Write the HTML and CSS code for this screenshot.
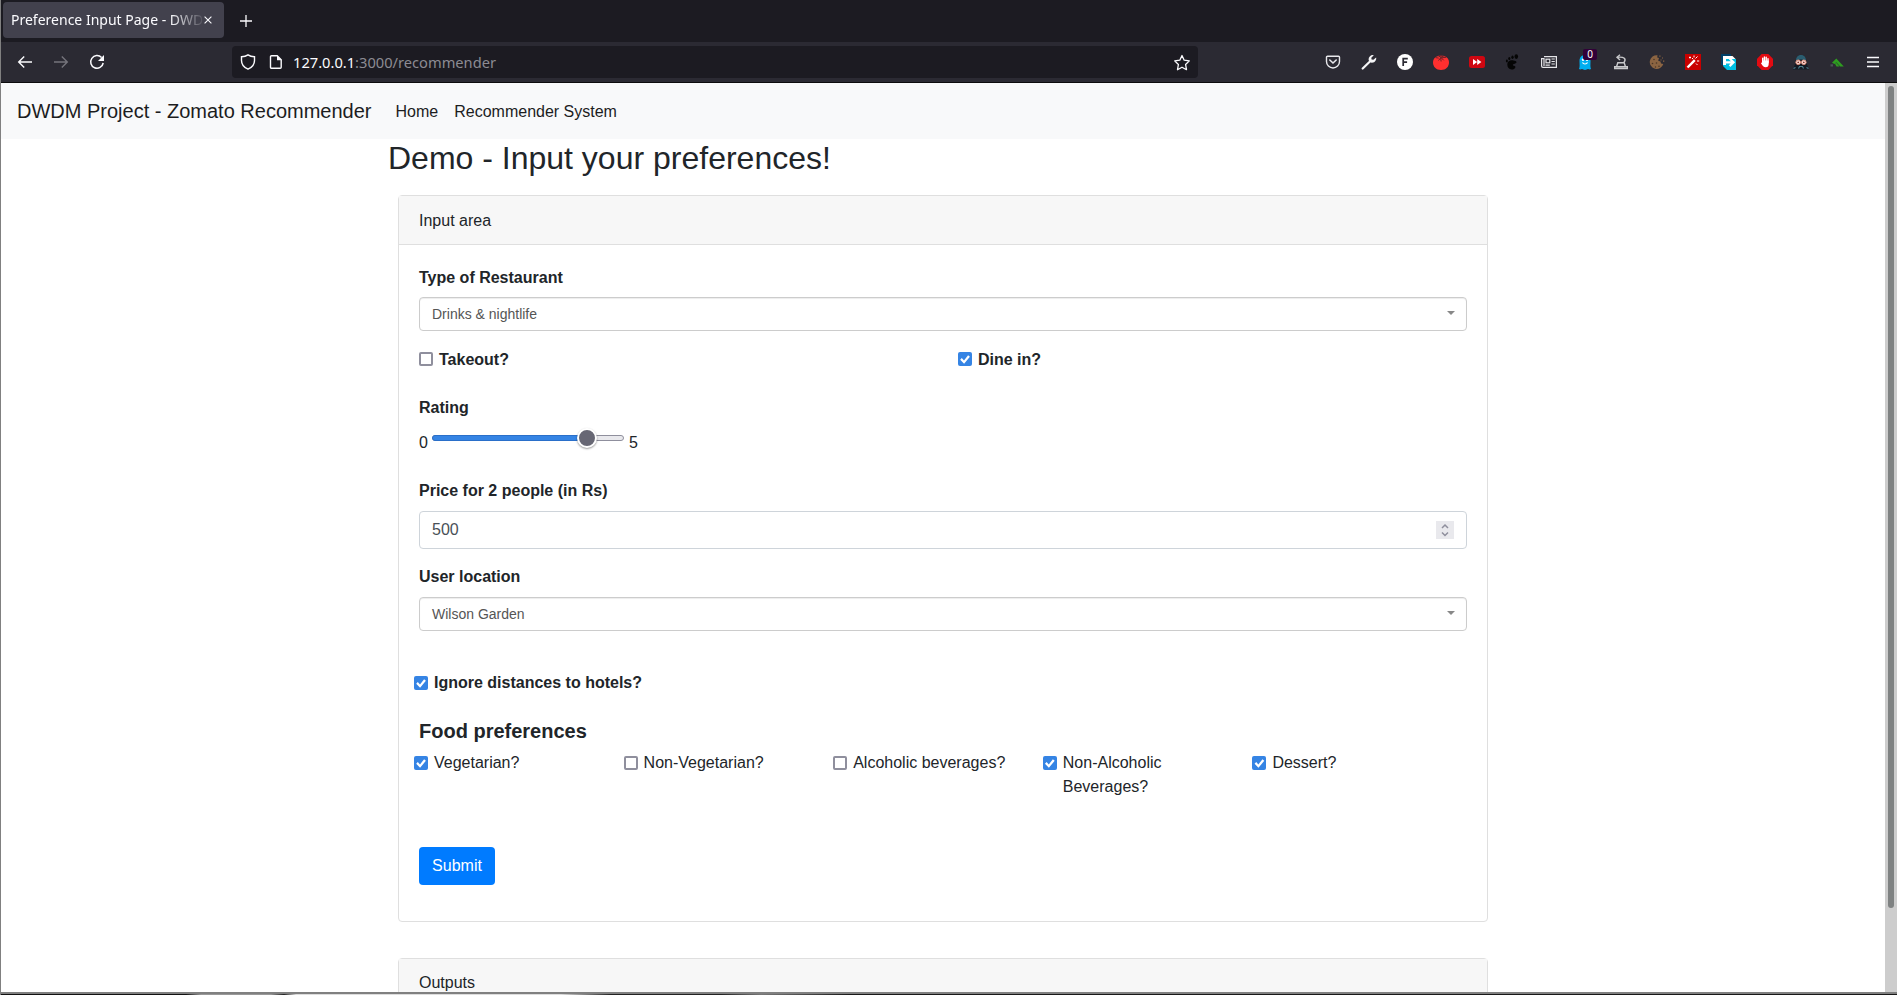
FILE: index.html
```html
<!DOCTYPE html>
<html lang="en">
<head>
<meta charset="utf-8">
<title>Preference Input Page - DWDM</title>
<link rel="stylesheet" href="styles.css">
</head>
<body>
<div class="window">
  <div class="tabbar">
    <div class="tab">
      <span class="tab-title">Preference Input Page - DWD</span>
      <svg class="tab-close" width="8" height="8" viewBox="0 0 8 8"><path d="M.6.6l6.8 6.8M7.4.6L.6 7.4" stroke="#fbfbfe" stroke-width="1.1"/></svg>
    </div>
    <svg class="tab-new" width="12" height="12" viewBox="0 0 12 12"><path d="M6 0v12M0 6h12" stroke="#fbfbfe" stroke-width="1.3"/></svg>
  </div>
  <div class="toolbar">
    <div class="nav-buttons">
      <svg width="16" height="16" viewBox="0 0 16 16"><path d="M15 8H1.8M7.2 2.5L1.7 8l5.5 5.5" fill="none" stroke="#fbfbfe" stroke-width="1.4"/></svg>
      <svg width="16" height="16" viewBox="0 0 16 16"><path d="M1 8h13.2M8.8 2.500L14.300 8l-5.500 5.500" fill="none" stroke="#75747c" stroke-width="1.4"/></svg>
      <svg width="16" height="16" viewBox="0 0 16 16"><path d="M12.600 3.600A6.300 6.300 0 1 0 14.200 9" fill="none" stroke="#fbfbfe" stroke-width="1.5"/><path d="M15 1v6H9z" fill="#fbfbfe"/></svg>
    </div>
    <div class="urlbar">
      <svg width="16" height="16" viewBox="0 0 16 16"><path d="M8 .9c2 1.500 4.200 1.900 6.500 1.900v3.600c0 4-2.500 7-6.500 8.800-4-1.800-6.500-4.800-6.500-8.800V2.800C3.800 2.800 6 2.400 8 .9z" fill="none" stroke="#fbfbfe" stroke-width="1.400"/></svg>
      <svg class="page-icon" width="14" height="16" viewBox="0 0 14 16"><path d="M2.500 1.800h5.700l4 4v7.400a1 1 0 0 1-1 1H2.500a1 1 0 0 1-1-1V2.800a1 1 0 0 1 1-1z" fill="none" stroke="#fbfbfe" stroke-width="1.400"/><path d="M8 1.500v4.700h4.700z" fill="#fbfbfe"/></svg>
      <span class="url"><span class="host">127.0.0.1</span>:3000/recommender</span>
      <svg class="star" width="18" height="17" viewBox="0 0 18 17"><path d="M9 1.500l2.200 4.700 5.100.700-3.700 3.600.900 5.200L9 13.200l-4.500 2.500.900-5.200L1.700 6.900l5.100-.700z" fill="none" stroke="#fbfbfe" stroke-width="1.300" stroke-linejoin="round"/></svg>
    </div>
    <div class="extensions">
      <svg viewBox="0 0 16 16"><path d="M2.500 2.200h11a1 1 0 0 1 1 1v4.300a6.500 6.500 0 0 1-13 0V3.200a1 1 0 0 1 1-1z" fill="none" stroke="#e8e8ec" stroke-width="1.400"/><path d="M4.800 6L8 9l3.200-3" fill="none" stroke="#e8e8ec" stroke-width="1.600" stroke-linecap="round"/></svg>
      <svg viewBox="0 0 16 16"><path d="M1.700 14.500l7.500-7.300" stroke="#f4f4f6" stroke-width="2.200" stroke-linecap="round"/><path d="M12.800 1.200a4.300 4.300 0 0 0-5 5.400l2 2a4.300 4.300 0 0 0 5.300-5.200l-2.700 2.400-1.800-.300-.300-1.700z" fill="#f4f4f6"/></svg>
      <svg viewBox="0 0 16 16"><circle cx="8" cy="8" r="8" fill="#fff"/><path d="M6.200 12V4.600h4.600M6.200 8.200h3.900" fill="none" stroke="#2b2a33" stroke-width="1.700"/></svg>
      <svg viewBox="0 0 16 16"><path d="M0 8.500C0 4.500 3 1.800 8 1.800s8 2.700 8 6.700-3 7.500-8 7.500-8-3.500-8-7.500z" fill="#fe2f2f"/><path d="M2.500 3.600l3.200.5M5.500 6.500l2.200-2.700.4 3.700M10.700 6.300L8.300 3.800l5-.5M8 3.800V.8M5 1.500l3 2 3-1.800" fill="none" stroke="#6b2228" stroke-width="1"/></svg>
      <svg viewBox="0 0 16 16"><rect y="2" width="16" height="12" rx="2.500" fill="#cf0711"/><path d="M4 5l4.200 3L4 11zM8.200 5l4.200 3-4.200 3z" fill="#fff"/></svg>
      <svg viewBox="0 0 16 16" fill="#050505"><path d="M8.500 6.500C5 5.500 2.300 7.300 2.300 10.600c0 3 1.700 4.900 4.300 4.900 2.200 0 3.800-1.200 3.800-2.600 0-1.700-2.600-.8-2.600-2 0-1 3.700-1.300 3.700-2.600 0-1-1.500-1.600-3-1.800z"/><ellipse cx="1.900" cy="7" rx="1" ry="1.400"/><ellipse cx="4.300" cy="4.500" rx="1.100" ry="1.500"/><ellipse cx="7.500" cy="3.200" rx="1.200" ry="1.700"/><ellipse cx="11.300" cy="2.600" rx="1.800" ry="2.400"/></svg>
      <svg viewBox="0 0 16 16" fill="none" stroke="#e4e4e8" stroke-width="1.200"><path d="M3 2.600h12.400v10.800H2A1.400 1.400 0 0 1 .6 12V4.600H3V12"/><rect x="5" y="5.200" width="3.800" height="3.600"/><path d="M10.500 5h3.300M10.500 7.500h3.300M10.500 10h3.300M4.500 11.200h4.300"/></svg>
      <span class="ghost"><svg viewBox="0 0 16 16"><path d="M2 15c1-2 .5-5 .5-8C2.500 3 5 1 8 1s5.500 2 5.500 6c0 3-.5 6 .5 8-1.500 1-2 0-3 0s-1.500 1-3 1-2-1-3-1-1.500 1-3 0z" fill="#00aef0"/><circle cx="6" cy="5.800" r="1.200" fill="#fff"/><circle cx="10" cy="5.800" r="1.200" fill="#fff"/><path d="M5.500 8.500c1 2 4 2 5 0" fill="none" stroke="#fff" stroke-width="1.200"/></svg><b>0</b></span>
      <svg viewBox="0 0 16 16" fill="none" stroke="#c9c9cc" stroke-width="1.400"><path d="M1.700 14.500v-1.700h12.600v1.700zM3.600 12.500l1.200-3.800h6.400l1.200 3.800M11 8.500c2.500-3.500.5-6-6.500-5.300"/><path d="M7 .800L4 3.200 7 6"/></svg>
      <svg viewBox="0 0 16 16"><path d="M8.500 1.200A6.900 6.900 0 1 0 14.300 10l-2.300-.5-.5-2-2.300-.8.8-2.700-1.800-.5z" fill="#8b6442"/><g fill="#4b3526"><circle cx="5" cy="5.500" r=".8"/><circle cx="3.500" cy="9.500" r=".8"/><circle cx="7.500" cy="9" r=".8"/><circle cx="10" cy="12.300" r=".8"/><circle cx="6.500" cy="13" r=".7"/></g><path d="M10.300 1.500h1.200v1.200h-1.200zM13 3.500h1v1h-1zM11.500 5.500h1v1h-1zM14 6.500h1.300v1.300H14z" fill="#8b6442"/></svg>
      <svg viewBox="0 0 16 16"><path d="M0 0h16v16H0z" fill="#c90000"/><path d="M2.500 13.500l7.300-7.300" stroke="#fff" stroke-width="2.400"/><path d="M5 2.500v2M4 3.500h2M9 1.500v2M12.500 2.500l-2 2M12 7h2.200M11 9.500l1.500 1.500M7 4l1 1" stroke="#fff" stroke-width="1"/></svg>
      <svg viewBox="0 0 16 16"><path d="M0 0h10v11H0z" fill="#003f67"/><path d="M2 2h9.500L15 5.500H2z" fill="#fff"/><path d="M2 5h13v11H6l-4-4z" fill="#00c0e4"/><path d="M2 3h3v8H2z" fill="#fff"/><path d="M4 8.300h8M8.600 4.500l3.900 3.800-3.900 3.800" fill="none" stroke="#fff" stroke-width="2.200"/></svg>
      <svg viewBox="0 0 16 16"><path d="M4.700 0h6.600L16 4.700v6.600L11.300 16H4.700L0 11.300V4.700z" fill="#e20b12"/><path d="M5.700 8V4.200M7.400 7.500V3M9.200 7.500V3.300M11 8.500V4.800" stroke="#fff" stroke-width="1.400" stroke-linecap="round"/><path d="M5 6.500h6.700V10c0 2-1 3.300-3 3.300-2.200 0-3-1.300-4.800-4.300l1.100-.400z" fill="#fff"/></svg>
      <svg viewBox="0 0 16 16"><path d="M0 15.500L2.500 9c0-5 2-8 5.500-8s5.500 3 5.500 8l2.500 6.500z" fill="#131a23"/><path d="M2.800 6.500C3.300 2.500 5.200 1 8 1s4.700 1.500 5.200 5.500L8 5.500z" fill="#2b5d70"/><g fill="#fbe9e4" stroke="#e08a76"><circle cx="5.200" cy="8.300" r="2.300"/><circle cx="10.800" cy="8.300" r="2.300"/></g><circle cx="5.200" cy="8.300" r=".9" fill="#802b20"/><circle cx="10.800" cy="8.300" r=".9" fill="#802b20"/><path d="M5.500 14.500l1-2h3l1 2M.5 14.500l2-1M15.500 14.500l-2-1" fill="none" stroke="#4f8191" stroke-width="1.100"/></svg>
      <svg viewBox="0 0 16 16"><path d="M3 8.800L7.300 4.500l7.500 8h-3.600L7.300 8.300 5.500 10zM6 9.800l1.200-1 3.300 3.700H7.500z" fill="#2e9e20"/><path d="M1.500 10.300h2.500v2.200H1.500z" fill="#4d5159"/></svg>
      <svg viewBox="0 0 16 16"><path d="M2 3.500h12M2 8h12M2 12.500h12" stroke="#fbfbfe" stroke-width="1.400"/></svg>
    </div>
  </div>

  <div class="viewport">
    <div class="page">
      <nav class="navbar">
        <span class="brand">DWDM Project - Zomato Recommender</span>
        <span class="nav-link">Home</span>
        <span class="nav-link">Recommender System</span>
      </nav>
      <main class="container">
        <h2 class="title">Demo - Input your preferences!</h2>
        <section class="card">
          <div class="card-header">Input area</div>
          <div class="card-body">
            <label class="label type-label">Type of Restaurant</label>
            <div class="select"><span>Drinks &amp; nightlife</span><i class="caret"></i></div>
            <div class="service-row">
              <label class="check strong"><i class="box"></i>Takeout?</label>
              <label class="check strong"><i class="box on"></i>Dine in?</label>
            </div>
            <label class="label">Rating</label>
            <div class="rating"><span>0</span><div class="slider"><div class="fill"></div><div class="thumb"></div></div><span>5</span></div>
            <label class="label">Price for 2 people (in Rs)</label>
            <div class="number"><span>500</span>
              <span class="spinner"><svg width="18" height="18" viewBox="0 0 18 18"><path d="M6 7l3-3 3 3M6 11.500l3 3 3-3" fill="none" stroke="#8f8f9d" stroke-width="1.500"/></svg></span>
            </div>
            <label class="label">User location</label>
            <div class="select"><span>Wilson Garden</span><i class="caret"></i></div>
            <div class="ignore-row"><label class="check strong"><i class="box on"></i>Ignore distances to hotels?</label></div>
            <h5 class="subtitle">Food preferences</h5>
            <div class="food">
              <label class="check"><i class="box on"></i><span>Vegetarian?</span></label>
              <label class="check"><i class="box"></i><span>Non-Vegetarian?</span></label>
              <label class="check"><i class="box"></i><span>Alcoholic beverages?</span></label>
              <label class="check"><i class="box on"></i><span>Non-Alcoholic<br>Beverages?</span></label>
              <label class="check"><i class="box on"></i><span>Dessert?</span></label>
            </div>
            <button class="submit" type="button">Submit</button>
          </div>
        </section>
        <section class="card outputs">
          <div class="card-header">Outputs</div>
        </section>
      </main>
    </div>
    <div class="scrollbar"><div class="scroll-thumb"></div></div>
  </div>
  <div class="desktop-edge"></div>
</div>
</body>
</html>
```
FILE: styles.css
```css
* { box-sizing: border-box; }
html, body { margin: 0; height: 995px; overflow: hidden; }
body {
  font: 16px/24px "Liberation Sans", Arial, sans-serif;
  color: #212529;
  background: #fff;
}
svg { display: block; flex: none; }
.window { display: flex; flex-direction: column; height: 995px; width: 1897px; border-left: 1px solid #808080; }

/* Browser chrome */
.tabbar { height: 42px; flex: none; background: #1c1b22; display: flex; align-items: flex-start; padding: 2px 0 0 2px; }
.tab {
  width: 221px; height: 36px; border-radius: 4px; background: #42414d; color: #fbfbfe;
  display: flex; align-items: center; padding: 0 11px 0 8px;
  font: 14px/20px "Noto Sans", sans-serif;
}
.tab-title {
  width: 191px; flex: none; overflow: hidden; white-space: nowrap;
  -webkit-mask-image: linear-gradient(to left, rgba(0, 0, 0, .1), #000 32px);
  mask-image: linear-gradient(to left, rgba(0, 0, 0, .1), #000 32px);
}
.tab-close { margin-left: 2px; }
.tab-new { margin: 13px 0 0 16px; }
.toolbar { height: 41px; flex: none; background: #2b2a33; border-bottom: 1px solid #0c0c0d; display: flex; align-items: center; }
.nav-buttons { width: 231px; display: flex; gap: 20px; padding-left: 16px; }
.urlbar {
  width: 966px; height: 32px; border-radius: 4px; background: #1c1b22;
  display: flex; align-items: center; padding: 0 7px 0 8px;
}
.page-icon { margin-left: 13px; }
.url { margin-left: 10px; font: 14.67px/20px "Noto Sans", sans-serif; color: #8c8b93; }
.host { color: #fbfbfe; }
.star { margin-left: auto; }
.extensions { display: flex; gap: 20px; margin-left: 127px; }
.extensions svg { width: 16px; height: 16px; }
.ghost { position: relative; width: 16px; }
.ghost b {
  position: absolute; left: 6px; top: -5px; width: 14px; height: 11px; border-radius: 2px;
  background: #320038; color: #fff; font: 10px/11px "Noto Sans", sans-serif; text-align: center;
}

/* Page */
.viewport { height: 909px; flex: none; display: flex; overflow: hidden; }
.page { width: 1884px; }
.scrollbar { width: 12px; background: #cdcdcd; padding: 3px 3px 0; }
.scroll-thumb { height: 822px; border-radius: 3px; background: #7f8282; }
.navbar { height: 56px; background: #f8f9fa; display: flex; align-items: center; padding: 0 16px; color: #1c1d1e; }
.brand { font-size: 20px; line-height: 30px; margin-right: 16px; }
.nav-link { padding: 2px 8px 0; }
.container { width: 1110px; margin: 0 auto; }
.title { font-size: 32px; line-height: 38.4px; font-weight: 400; margin: 0 0 18px; }
.card { margin: 0 10px; border: 1px solid #dfdfdf; border-radius: 4px; }
.outputs { margin-top: 36px; }
.card-header { height: 49px; padding: 13px 20px 11px; background: #f7f7f7; border-bottom: 1px solid #dfdfdf; }
.outputs .card-header { padding-top: 12px; }
.card-body { padding: 21px 20px 36px; }
.label { display: block; font-weight: 700; margin-bottom: 8px; }
.type-label { margin-bottom: 7px; }
.select {
  height: 34px; border: 1px solid #ccc; border-radius: 4px; padding: 0 11px 0 12px;
  box-shadow: inset 0 1px 1px rgba(0, 0, 0, .075);
  display: flex; align-items: center; justify-content: space-between; font-size: 14px; color: #555;
}
.caret { border: 4px solid transparent; border-top-color: #888; border-bottom: 0; margin-top: -2px; }
.service-row { display: grid; grid-template-columns: 539px 1fr; margin: 17px 0 24px; }
.check { display: flex; }
.strong { font-weight: 700; }
.box { flex: none; width: 14px; height: 14px; margin: 5px 6px 0 0; border: 2px solid #8f8f9d; border-radius: 2px; background: #fff; }
.service-row .box { margin-top: 4px; }
.box.on { border: 0; background: #3584e4; }
.box.on::after {
  content: ""; display: block; width: 14px; height: 14px; background: #fff;
  clip-path: polygon(2.200px 7.300px, 3.800px 5.700px, 6px 8px, 10.100px 2.900px, 11.900px 4.400px, 6.100px 11.400px);
}
.rating { display: flex; height: 24px; margin: 11px 0 24px; }
.slider { position: relative; width: 192px; height: 6px; margin: 4px 5px 0 4px; border: 1px solid #8f8f9d; border-radius: 3px; background: #e9e9ed; }
.fill { width: 155px; height: 6px; margin: -1px; border: 1px solid #2a6fc9; border-radius: 3px; background: #3584e4; }
.thumb { position: absolute; left: 144px; top: -8px; width: 20px; height: 20px; border-radius: 50%; border: 2px solid #fff; background: #676774; box-shadow: 0 1px 2px rgba(0, 0, 0, .4); }
.number {
  height: 38px; border: 1px solid #ced4da; border-radius: 4px; margin-bottom: 16px; padding: 0 12px;
  display: flex; align-items: center; justify-content: space-between; color: #495057;
}
.spinner { background: #e9e9ed; }
.ignore-row { margin: 40px 0 24px -5px; }
.subtitle { font-size: 20px; line-height: 24px; font-weight: 700; margin: 0 0 8px; }
.food { display: grid; grid-template-columns: repeat(5, 209.6px); margin-left: -5px; height: 96px; }
.submit {
  display: block; width: 76px; height: 38px; border: 0; border-radius: 4px; padding: 0;
  background: #007bff; color: #fff; font: 16px/24px "Liberation Sans", Arial, sans-serif;
}
.desktop-edge { flex: 1; border-top: 2px solid #808080; background: linear-gradient(90deg, #111 0 185px, #999 200px 270px, #222 283px, #ddd 295px 560px, #222 610px 720px, #777 760px, #181818 850px); }
```
